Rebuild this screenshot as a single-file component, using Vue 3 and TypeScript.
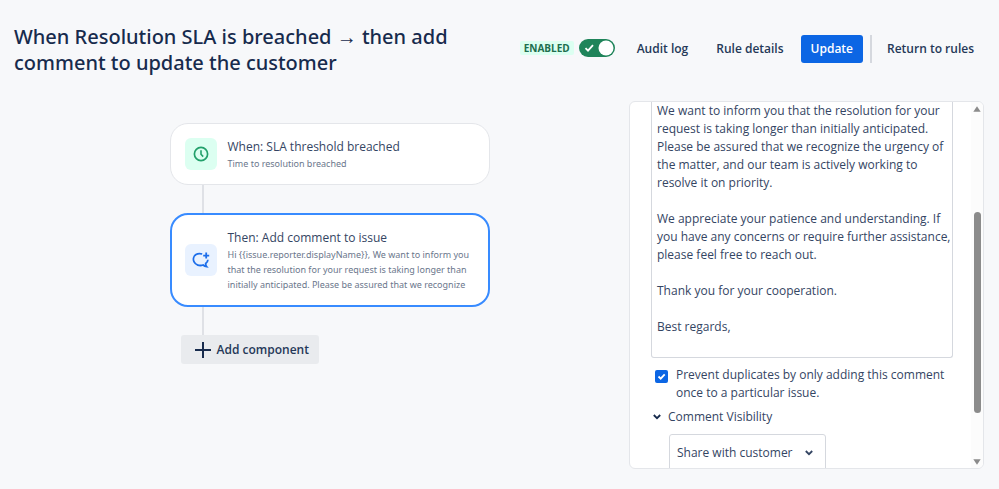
<script setup lang="ts">
import { ref } from 'vue'

const enabled = ref(true)
const preventDuplicates = ref(true)
const visibilityOpen = ref(true)
const visibility = ref('customer')

const comment = ref(
  [
    'We want to inform you that the resolution for your request is taking longer than initially anticipated. Please be assured that we recognize the urgency of the matter, and our team is actively working to resolve it on priority.',
    'We appreciate your patience and understanding. If you have any concerns or require further assistance, please feel free to reach out.',
    'Thank you for your cooperation.',
    'Best regards,',
  ].join('\n\n'),
)
</script>

<template>
  <div class="page">
    <header class="header">
      <h1 class="title">When Resolution SLA is breached → then add comment to update the customer</h1>
      <div class="status">
        <span class="badge">ENABLED</span>
        <label class="toggle">
          <input v-model="enabled" type="checkbox" role="switch" aria-label="Rule enabled" />
          <svg viewBox="0 0 36 18" aria-hidden="true">
            <rect class="track" width="36" height="18" rx="9" />
            <path d="M6.500 9.200 9 11.700l5-5.600" fill="none" stroke="#fff" stroke-width="1.8" />
            <circle cx="27" cy="9" r="7.5" fill="#fff" />
          </svg>
        </label>
      </div>
      <nav class="actions">
        <button type="button" class="link">Audit log</button>
        <button type="button" class="link">Rule details</button>
        <button type="button" class="primary">Update</button>
        <span class="divider"></span>
        <a href="#rules" class="link">Return to rules</a>
      </nav>
    </header>

    <main class="main">
      <section class="flow">
        <article class="card">
          <span class="icon green">
            <svg viewBox="0 0 16 16" width="16" height="16" aria-hidden="true" fill="none" stroke="#22a06b">
              <circle cx="8" cy="8" r="6.6" stroke-width="1.7" />
              <path d="M8 4.200v4.100l2.200 2.300" stroke-width="1.6" />
            </svg>
          </span>
          <div class="text">
            <h2>When: SLA threshold breached</h2>
            <p>Time to resolution breached</p>
          </div>
        </article>
        <span class="connector"></span>
        <article class="card selected">
          <span class="icon blue">
            <svg viewBox="0 0 18 18" width="18" height="18" aria-hidden="true" fill="none" stroke="#1d6eea" stroke-width="1.8">
              <path d="M10.200 3C8 2.400 5.700 2.500 4 3.600 1.500 5.200.8 8.300 2.100 10.900c1.500 3 5.300 4.400 9 3.100 1 .9 2 1.500 3.600 1.700-.8-1-1.100-2-1-3.200 1.300-1 2.100-2.300 2.200-3.800" />
              <path d="M14.200 1.600v6M11.200 4.600h6" />
            </svg>
          </span>
          <div class="text">
            <h2>Then: Add comment to issue</h2>
            <p v-pre>Hi {{issue.reporter.displayName}}, We want to inform you that the resolution for your request is taking longer than initially anticipated. Please be assured that we recognize</p>
          </div>
        </article>
        <span class="connector"></span>
        <button type="button" class="add">
          <svg viewBox="0 0 16 16" width="16" height="16" aria-hidden="true">
            <path d="M8 0v16M0 8h16" stroke="#172b4d" stroke-width="2" />
          </svg>
          Add component
        </button>
      </section>

      <aside class="panel">
        <div class="panel-body">
          <textarea v-model="comment" class="comment" aria-label="Comment" spellcheck="false"></textarea>
          <label class="check">
            <input v-model="preventDuplicates" type="checkbox" />
            <span class="box">
              <svg v-if="preventDuplicates" viewBox="0 0 13 13" aria-hidden="true">
                <path d="m3.500 6.500 2.200 2.200 4-4.300" fill="none" stroke="#fff" stroke-width="1.8" />
              </svg>
            </span>
            <span>Prevent duplicates by only adding this comment once to a particular issue.</span>
          </label>
          <button type="button" class="expander" :aria-expanded="visibilityOpen" @click="visibilityOpen = !visibilityOpen">
            <svg viewBox="0 0 8 6" width="8" height="6" aria-hidden="true">
              <path d="m.8 1 3.200 3.200L7.200 1" fill="none" stroke="#172b4d" stroke-width="1.8" />
            </svg>
            Comment Visibility
          </button>
          <div v-if="visibilityOpen" class="select">
            <select v-model="visibility" aria-label="Comment Visibility">
              <option value="customer">Share with customer</option>
              <option value="internal">Internal note</option>
            </select>
            <svg viewBox="0 0 8 6" width="8" height="6" aria-hidden="true">
              <path d="m.8 1 3.200 3.200L7.200 1" fill="none" stroke="#344563" stroke-width="1.8" />
            </svg>
          </div>
        </div>
        <div class="scrollbar" aria-hidden="true">
          <svg viewBox="0 0 8 6" width="8" height="6"><path d="M4 .3 7.700 5.700H.3z" fill="#8b8b8b" /></svg>
          <div class="rail">
            <span class="above"></span>
            <span class="thumb"></span>
            <span class="below"></span>
          </div>
          <svg viewBox="0 0 8 6" width="8" height="6"><path d="M4 5.700.3.3h7.400z" fill="#8b8b8b" /></svg>
        </div>
      </aside>
    </main>
  </div>
</template>

<style>
body {
  background: #f7f8fa;
}
</style>

<style scoped>
* {
  box-sizing: border-box;
}

.page {
  display: flex;
  flex-direction: column;
  height: 100vh;
  padding: 24px 15px 20px 14px;
  color: #344563;
  background: #f7f8fa;
  font: 12px/18px "Open Sans", "Noto Sans", sans-serif;
}

button,
select,
textarea {
  margin: 0;
  color: inherit;
  font: inherit;
}

button {
  padding: 0;
  border: 0;
  background: none;
  cursor: pointer;
}

.header {
  display: flex;
  align-items: flex-start;
  flex: none;
  height: 77px;
}

.title {
  flex: 1;
  margin: 0;
  padding-right: 56px;
  color: #172b4d;
  font-family: "Noto Sans", "Open Sans", sans-serif;
  font-size: 20px;
  font-weight: 500;
  line-height: 26px;
}

.status {
  display: flex;
  align-items: center;
  gap: 5px;
  height: 48px;
}

.badge {
  padding: 0 4px;
  border-radius: 2px;
  background: #dcfff1;
  color: #216e4e;
  font-size: 10px;
  font-weight: 700;
  line-height: 14px;
}

.toggle {
  display: grid;
  width: 36px;
  height: 18px;
}

.toggle > * {
  grid-area: 1 / 1;
  width: 36px;
  height: 18px;
  margin: 0;
}

.toggle input {
  appearance: none;
}

.track {
  fill: #8590a2;
}

.toggle input:checked + svg .track {
  fill: #1f845a;
}

.actions {
  display: flex;
  align-items: center;
  height: 50px;
  padding-left: 12px;
}

.link {
  padding: 0 10px;
  color: #253858;
  font-weight: 600;
  text-decoration: none;
}

.link + .link {
  margin-left: 8px;
}

.primary {
  height: 28px;
  margin: 0 7px;
  padding: 0 10px;
  border-radius: 3px;
  background: #0c66e4;
  color: #fff;
  font-weight: 600;
}

.divider {
  width: 2px;
  height: 28px;
  margin-right: 5px;
  background: #d5d8de;
}

.main {
  display: flex;
  flex: 1;
  min-height: 0;
}

.flow {
  display: flex;
  flex: 1;
  flex-direction: column;
  align-items: center;
  padding: 22px 0 0 16px;
}

.flow > * {
  width: 320px;
}

.card {
  display: flex;
  align-items: center;
  gap: 11px;
  padding: 13px 14px;
  border: 1px solid #e4e6ea;
  border-radius: 18px;
  background: #fff;
}

.selected {
  padding: 13px;
  border: 2px solid #388bff;
}

.icon {
  display: grid;
  flex: none;
  place-items: center;
  width: 32px;
  height: 32px;
  border-radius: 6px;
}

.green {
  background: #dcfff1;
}

.blue {
  background: #e9f2ff;
}

.text h2 {
  margin: 0;
  font-size: 12px;
  font-weight: 400;
  line-height: 19px;
}

.text p {
  margin: 0;
  color: #6b778c;
  font-family: "Noto Sans", "Open Sans", sans-serif;
  font-size: 9px;
  line-height: 15px;
}

.flow > .connector {
  width: 2px;
  height: 28px;
  margin-right: 254px;
  background: #dfe1e6;
}

.flow > .add {
  display: flex;
  align-items: center;
  gap: 6px;
  width: 138px;
  height: 29px;
  margin-right: 160px;
  padding-left: 14px;
  border-radius: 3px;
  background: #e9ebee;
  color: #253858;
  font-weight: 600;
}

.panel {
  display: flex;
  width: 355px;
  border: 1px solid #e4e6ea;
  border-radius: 6px;
  background: #fff;
  overflow: hidden;
}

.panel-body {
  flex: 1;
  padding: 0 18px 0 21px;
  overflow: hidden;
}

.comment {
  display: block;
  width: 100%;
  height: 256px;
  padding: 0 0 0 5px;
  border: 1px solid #d5d8de;
  border-top: 0;
  border-radius: 0 0 3px 3px;
  outline: none;
  resize: none;
  overflow: hidden;
  background: #fff;
}

.check {
  display: flex;
  gap: 8px;
  margin-top: 8px;
  padding-left: 4px;
}

.check input {
  appearance: none;
  width: 0;
  height: 0;
  margin: 0 -8px 0 0;
}

.box {
  flex: none;
  width: 13px;
  height: 13px;
  margin-top: 4px;
  border-radius: 2px;
  background: #0c66e4;
}

.box svg {
  display: block;
}

.expander {
  display: flex;
  align-items: center;
  gap: 7px;
  margin-top: 6px;
  padding-left: 2px;
}

.select {
  display: grid;
  align-items: center;
  width: 157px;
  margin: 8px 0 0 18px;
}

.select > * {
  grid-area: 1 / 1;
}

.select select {
  appearance: none;
  width: 100%;
  height: 37px;
  padding: 0 7px;
  border: 1px solid #d5d8de;
  border-radius: 3px;
  background: #fff;
}

.select svg {
  justify-self: end;
  margin-right: 13px;
  pointer-events: none;
}

.scrollbar {
  display: flex;
  flex-direction: column;
  align-items: center;
  width: 12px;
  padding: 4px 0 3px;
  background: #fcfcfc;
}

.rail {
  display: flex;
  flex: 1;
  flex-direction: column;
  width: 7px;
}

.above {
  flex: 100;
}

.thumb {
  flex: 201;
  border-radius: 4px;
  background: #8b8b8b;
}

.below {
  flex: 46;
}
</style>
